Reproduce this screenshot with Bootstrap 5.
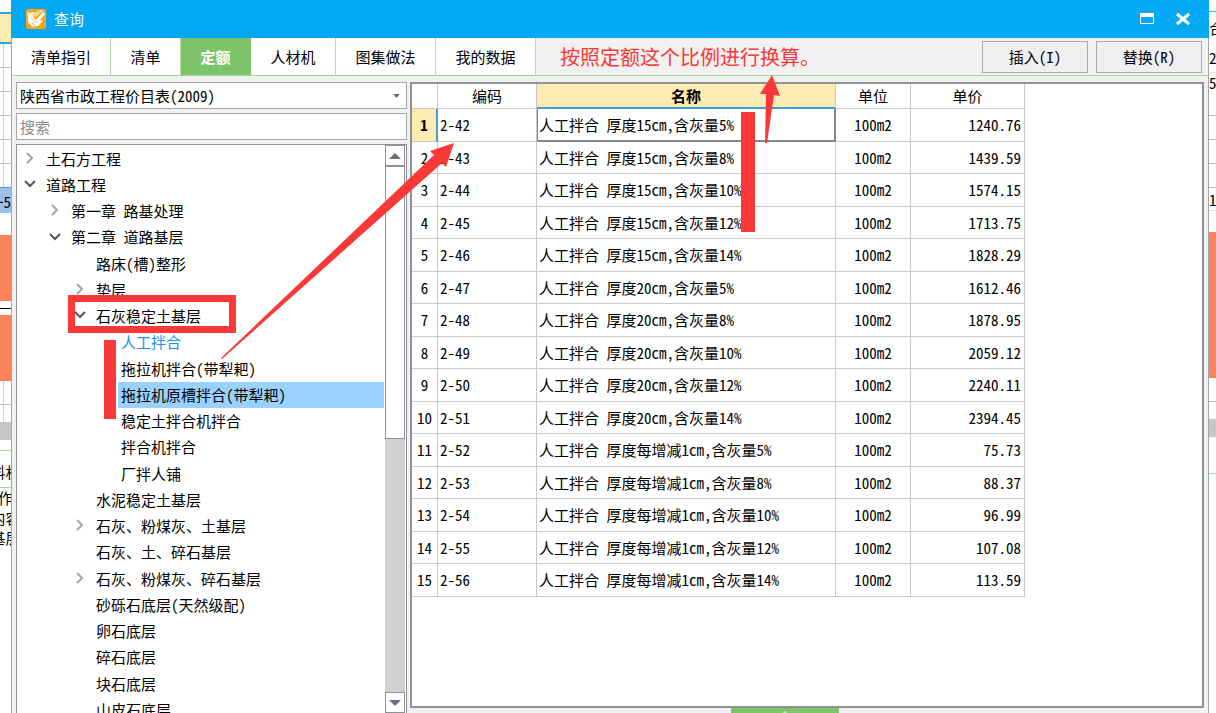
<!DOCTYPE html>
<html lang="zh-CN">
<head>
<meta charset="utf-8">
<meta name="viewport" content="width=device-width, initial-scale=1">
<title>查询</title>
<link href="https://cdn.jsdelivr.net/npm/bootstrap@5.3.0/dist/css/bootstrap.min.css" rel="stylesheet">
<style>
  :root { --line:#c9c9c9; --frame:#8f9399; --face:#f1f1f1; --sky:#02a9f2; --leaf:#7cc36a; --cream:#feebb2; --pen:#fb3838; --coral:#f9845c; }
  body { font-family:"Noto Sans CJK SC",sans-serif; font-size:15px; line-height:20px; color:#000; font-feature-settings:"hwid"; background:#fff; }
  button, select, input { font-feature-settings:inherit; }

  /* slices of the main application left and right of the dialog */
  .backdrop { width:11px; flex:none; }
  .backdrop.right-side { width:7px; }
  .backdrop > div { flex:none; overflow:hidden; white-space:nowrap; }
  .h-top { height:12px; } .h-cream { height:32px; background:var(--cream); border:solid #2ea6dc; border-width:2px 0; }
  .lines { background:linear-gradient(90deg,transparent 3px,#cfcfcf 3px 4px,transparent 4px),repeating-linear-gradient(#fff 0 23px,#bdbdbd 23px 24px); }
  .right-side .lines { background:repeating-linear-gradient(#fff 0 23px,#bdbdbd 23px 24px); }
  .h-grid { height:143px; }
  .h-pick { height:26px; border-top:1px solid #2ea6dc; background:#9dbfe8; line-height:28px; }
  .h-gap { height:22px; } .h-coral { height:66px; background:var(--coral); } .h-cell { height:14px; line-height:12px; }
  .h-few { height:41px; } .h-bar { height:18px; background:#c6c6c6; } .h-tab { height:11px; border-bottom:1px solid #a9d99d; }
  .h-text { height:37px; line-height:42px; border-bottom:1px solid #a9d99d; }
  .h-row { height:20px; }
  .h-coral-tall { height:146px; background:var(--coral); }
  .right-side .h-grid { height:98px; }

  .dialog { background:var(--face); min-width:0; }
  .dialog-frame { border:solid #a3a7ab; border-width:0 1px; min-height:0; }
  .title-bar { height:38px; background:var(--sky); padding:0 18px 0 15px; }
  .title-bar button { width:16px; height:16px; padding:0; border:0; background:none; line-height:0; }
  .window-keys { gap:20px; }
  .tool-bar { height:38px; border-bottom:1px solid #a5d69b; padding-right:6px; flex:none; }
  .tool-bar .nav-link { height:37px; padding:0; color:#000; background:#fff; border-right:1px solid #b4dfab; border-radius:0; }
  .tool-bar .nav-link.active { background:var(--leaf); color:#fff; font-weight:700; border-color:var(--leaf); }
  .w-a { width:99px; } .w-b { width:70px; } .w-c { width:85px; } .w-d { width:100px; }
  .remark { font-size:20px; color:var(--pen); }
  .btn-flat { width:106px; height:32px; padding:0; border:1px solid #aaa; border-radius:0; background:#efefef; font-size:15px; line-height:20px; color:#000; }

  .work { padding:6px 4px 0 4px; gap:3px; min-height:0; }
  .side { width:391px; flex:none; gap:4px; min-height:0; }
  .side .form-select, .side .form-control { height:27px; padding:0 3px; border:1px solid #a3a6aa; border-radius:0; font-size:15px; line-height:20px; color:#000; flex:none; }
  .side .form-select { background-image:url("data:image/svg+xml,%3Csvg xmlns='http://www.w3.org/2000/svg' viewBox='0 0 8 5'%3E%3Cpath fill='%23666' d='M0 0h8L4 5z'/%3E%3C/svg%3E"); background-size:7px 4px; background-position:right 6px center; }
  .side .form-control::placeholder { color:#8a8a8a; opacity:1; }

  .tree-box { border:1px solid var(--frame); border-bottom:0; background:#fff; min-height:0; overflow:hidden; }
  .tree { margin:0; padding:1px; list-style:none; min-width:0; }
  .tree li { display:flex; height:26px; line-height:26px; white-space:nowrap; }
  .tree li:nth-child(4n) { height:27px; }
  .tree .tw { width:25px; flex:none; display:flex; align-items:center; padding:0 0 2px 6px; }
  .tree a { color:inherit; text-decoration:none; flex:1; padding-left:3px; }
  .l1 { padding-left:25px; } .l2 { padding-left:50px; } .l3 { padding-left:75px; }
  .tree .chosen a { background:#99d1ff; }
  .tree .current a { color:#1e90f5; }
  .tw svg { width:12px; height:12px; fill:none; stroke-width:2; }
  .shut { stroke:#a5a5a5; } .open { stroke:#555; }

  .scroller { width:21px; flex:none; background:#d1d1d1; border-right:1px solid #fff; }
  .scroller > * { border:1px solid var(--frame); background:#fff; }
  .scroller button { height:21px; padding:0; line-height:0; flex:none; }
  .thumb { height:48%; }

  .rates-pane { min-width:0; }
  .sheet { border:2px solid var(--frame); border-left-width:2px; background:#fff; min-height:0; overflow:hidden; }
  .rates { width:613px; table-layout:fixed; margin:0; color:#000; border-color:var(--line); border-collapse:separate; border-spacing:0; }
  .rates > :not(caption) > * { border-width:0; }
  .rates > :not(caption) > * > * { height:33px; padding:0 2px; border:solid var(--line); border-width:0 1px 1px 0; white-space:nowrap; vertical-align:middle; background:none; box-shadow:none; }
  .rates tbody tr:nth-child(even) > * { height:32px; }
  .rates thead tr > * { height:25px; text-align:center; font-weight:400; }
  .rates tbody th { text-align:center; font-weight:400; padding:0; }
  .rates td:nth-child(4) { text-align:center; }
  .rates td:nth-child(5) { text-align:right; padding-right:3px; }
  .rates thead tr > .hot { background:var(--cream); font-weight:700; border-bottom:2px solid #3ba1cd; }
  .rates tbody tr > .hot { background:var(--cream); font-weight:700; border-right:2px solid #3ba1cd; }
  .rates tbody tr > .focus-cell { border:solid #85878a; border-width:0 2px 2px 1px; padding:0 1px; }
  .c1 { width:26px; } .c2 { width:99px; } .c3 { width:299px; } .c4 { width:75px; } .c5 { width:114px; }

  .foot { height:5px; flex:none; padding-left:321px; overflow:hidden; }
  .grip { width:108px; height:12px; padding:0; border:0; background:var(--leaf); display:block; line-height:0; }

  .marks { position:absolute; left:0; top:0; width:1216px; height:713px; pointer-events:none; fill:var(--pen); }
</style>
</head>
<body>
<div class="d-flex vh-100 overflow-hidden position-relative">

  <div class="backdrop d-flex flex-column" aria-hidden="true">
    <div class="h-top"></div><div class="h-cream"></div>
    <div class="h-grid lines"></div>
    <div class="h-pick d-flex justify-content-end">一5</div><div class="h-gap"></div>
    <div class="h-coral"></div><div class="h-cell d-flex justify-content-center">—</div><div class="h-coral"></div>
    <div class="h-few lines"></div><div class="h-bar"></div><div class="h-tab"></div>
    <div class="h-text d-flex justify-content-center">料机</div>
    <div class="h-row d-flex justify-content-center">作</div>
    <div class="h-row d-flex justify-content-center">内容</div>
    <div class="h-row d-flex justify-content-center">基层</div>
  </div>

  <main class="dialog flex-grow-1 d-flex flex-column">
    <header class="title-bar d-flex align-items-center text-white flex-shrink-0">
      <svg width="20" height="20" viewBox="0 0 20 20" aria-hidden="true">
        <rect width="20" height="20" rx="2" fill="#f8a41c"/>
        <path d="M1 3h9l3-2h5l-8 7-9-1z" fill="#fcd48b"/>
        <path d="M2 6 8 3 6 7l4 4 7-8 2 2-5 6 3 1-5 5-6 1-4-5z" fill="#fff"/>
        <path d="m5 8 4 5h3M6 14l3 2" stroke="#f9bd5e" stroke-width="1" fill="none"/>
      </svg>
      <span class="ms-2 me-auto">查询</span>
      <div class="window-keys d-flex">
        <button type="button" aria-label="最大化"><svg width="16" height="16"><path d="M1 2h14v11H1zM2 6v6h12V6z" fill="#fff" fill-rule="evenodd"/></svg></button>
        <button type="button" aria-label="关闭"><svg width="16" height="16"><path d="m2 3 12 10m0-10-12 10" stroke="#fff" stroke-width="3"/></svg></button>
      </div>
    </header>

    <div class="dialog-frame flex-grow-1 d-flex flex-column">
      <div class="tool-bar d-flex align-items-center">
        <nav class="nav flex-nowrap text-center" aria-label="查询类型">
          <a class="nav-link w-a d-flex align-items-center justify-content-center" href="#">清单指引</a>
          <a class="nav-link w-b d-flex align-items-center justify-content-center" href="#">清单</a>
          <a class="nav-link w-b d-flex align-items-center justify-content-center active" href="#">定额</a>
          <a class="nav-link w-c d-flex align-items-center justify-content-center" href="#">人材机</a>
          <a class="nav-link w-d d-flex align-items-center justify-content-center" href="#">图集做法</a>
          <a class="nav-link w-d d-flex align-items-center justify-content-center" href="#">我的数据</a>
        </nav>
        <span class="remark ms-4 me-auto text-nowrap">按照定额这个比例进行换算。</span>
        <button type="button" class="btn btn-flat me-2">插入(I)</button>
        <button type="button" class="btn btn-flat">替换(R)</button>
      </div>

      <div class="work d-flex flex-grow-1">
        <section class="side d-flex flex-column">
          <select class="form-select" aria-label="定额库"><option>陕西省市政工程价目表(2009)</option></select>
          <input class="form-control" type="text" placeholder="搜索" aria-label="搜索">
          <div class="tree-box d-flex flex-grow-1">
            <ul class="tree flex-grow-1">
              <li><span class="tw shut"><svg viewBox="0 0 12 12"><path d="m3 1 5 5-5 5"/></svg></span><a href="#">土石方工程</a></li>
              <li><span class="tw open"><svg viewBox="0 0 12 12"><path d="m1 3 5 5 5-5"/></svg></span><a href="#">道路工程</a></li>
              <li class="l1"><span class="tw shut"><svg viewBox="0 0 12 12"><path d="m3 1 5 5-5 5"/></svg></span><a href="#">第一章 路基处理</a></li>
              <li class="l1"><span class="tw open"><svg viewBox="0 0 12 12"><path d="m1 3 5 5 5-5"/></svg></span><a href="#">第二章 道路基层</a></li>
              <li class="l2"><span class="tw"></span><a href="#">路床(槽)整形</a></li>
              <li class="l2"><span class="tw shut"><svg viewBox="0 0 12 12"><path d="m3 1 5 5-5 5"/></svg></span><a href="#">垫层</a></li>
              <li class="l2"><span class="tw open"><svg viewBox="0 0 12 12"><path d="m1 3 5 5 5-5"/></svg></span><a href="#">石灰稳定土基层</a></li>
              <li class="l3 current"><span class="tw"></span><a href="#">人工拌合</a></li>
              <li class="l3"><span class="tw"></span><a href="#">拖拉机拌合(带犁耙)</a></li>
              <li class="l3 chosen"><span class="tw"></span><a href="#">拖拉机原槽拌合(带犁耙)</a></li>
              <li class="l3"><span class="tw"></span><a href="#">稳定土拌合机拌合</a></li>
              <li class="l3"><span class="tw"></span><a href="#">拌合机拌合</a></li>
              <li class="l3"><span class="tw"></span><a href="#">厂拌人铺</a></li>
              <li class="l2"><span class="tw"></span><a href="#">水泥稳定土基层</a></li>
              <li class="l2"><span class="tw shut"><svg viewBox="0 0 12 12"><path d="m3 1 5 5-5 5"/></svg></span><a href="#">石灰、粉煤灰、土基层</a></li>
              <li class="l2"><span class="tw"></span><a href="#">石灰、土、碎石基层</a></li>
              <li class="l2"><span class="tw shut"><svg viewBox="0 0 12 12"><path d="m3 1 5 5-5 5"/></svg></span><a href="#">石灰、粉煤灰、碎石基层</a></li>
              <li class="l2"><span class="tw"></span><a href="#">砂砾石底层(天然级配)</a></li>
              <li class="l2"><span class="tw"></span><a href="#">卵石底层</a></li>
              <li class="l2"><span class="tw"></span><a href="#">碎石底层</a></li>
              <li class="l2"><span class="tw"></span><a href="#">块石底层</a></li>
              <li class="l2"><span class="tw"></span><a href="#">山皮石底层</a></li>
            </ul>
            <div class="scroller d-flex flex-column">
              <button type="button" aria-label="向上滚动"><svg width="12" height="6"><path d="m0 6 6-6 6 6z" fill="#6c7080"/></svg></button>
              <div class="thumb"></div>
              <button type="button" class="mt-auto" aria-label="向下滚动"><svg width="12" height="6"><path d="m0 0 6 6 6-6z" fill="#6c7080"/></svg></button>
            </div>
          </div>
        </section>

        <section class="rates-pane flex-grow-1 d-flex flex-column">
          <div class="sheet flex-grow-1">
            <table class="table rates">
              <colgroup><col class="c1"><col class="c2"><col class="c3"><col class="c4"><col class="c5"></colgroup>
              <thead><tr><td></td><th>编码</th><th class="hot">名称</th><th>单位</th><th>单价</th></tr></thead>
              <tbody>
                <tr><th class="hot">1</th><td>2-42</td><td class="focus-cell">人工拌合 厚度15cm,含灰量5%</td><td>100m2</td><td>1240.76</td></tr>
                <tr><th>2</th><td>2-43</td><td>人工拌合 厚度15cm,含灰量8%</td><td>100m2</td><td>1439.59</td></tr>
                <tr><th>3</th><td>2-44</td><td>人工拌合 厚度15cm,含灰量10%</td><td>100m2</td><td>1574.15</td></tr>
                <tr><th>4</th><td>2-45</td><td>人工拌合 厚度15cm,含灰量12%</td><td>100m2</td><td>1713.75</td></tr>
                <tr><th>5</th><td>2-46</td><td>人工拌合 厚度15cm,含灰量14%</td><td>100m2</td><td>1828.29</td></tr>
                <tr><th>6</th><td>2-47</td><td>人工拌合 厚度20cm,含灰量5%</td><td>100m2</td><td>1612.46</td></tr>
                <tr><th>7</th><td>2-48</td><td>人工拌合 厚度20cm,含灰量8%</td><td>100m2</td><td>1878.95</td></tr>
                <tr><th>8</th><td>2-49</td><td>人工拌合 厚度20cm,含灰量10%</td><td>100m2</td><td>2059.12</td></tr>
                <tr><th>9</th><td>2-50</td><td>人工拌合 厚度20cm,含灰量12%</td><td>100m2</td><td>2240.11</td></tr>
                <tr><th>10</th><td>2-51</td><td>人工拌合 厚度20cm,含灰量14%</td><td>100m2</td><td>2394.45</td></tr>
                <tr><th>11</th><td>2-52</td><td>人工拌合 厚度每增减1cm,含灰量5%</td><td>100m2</td><td>75.73</td></tr>
                <tr><th>12</th><td>2-53</td><td>人工拌合 厚度每增减1cm,含灰量8%</td><td>100m2</td><td>88.37</td></tr>
                <tr><th>13</th><td>2-54</td><td>人工拌合 厚度每增减1cm,含灰量10%</td><td>100m2</td><td>96.99</td></tr>
                <tr><th>14</th><td>2-55</td><td>人工拌合 厚度每增减1cm,含灰量12%</td><td>100m2</td><td>107.08</td></tr>
                <tr><th>15</th><td>2-56</td><td>人工拌合 厚度每增减1cm,含灰量14%</td><td>100m2</td><td>113.59</td></tr>
              </tbody>
            </table>
          </div>
          <div class="foot"><button type="button" class="grip" aria-label="展开"><svg width="12" height="8"><path d="m1 8 5-6 5 6" fill="none" stroke="#c5e6bd" stroke-width="2"/></svg></button></div>
        </section>
      </div>
    </div>
  </main>

  <div class="backdrop right-side d-flex flex-column" aria-hidden="true">
    <div class="h-top border-bottom border-info"></div>
    <div class="h-cream bg-white border-0 d-flex align-items-center">合</div>
    <div class="h-row mt-1">2</div><div class="h-row mt-1 border-top">5</div>
    <div class="h-grid lines"></div>
    <div class="h-row">1</div><div class="h-gap border-top"></div>
    <div class="h-coral-tall"></div><div class="h-few lines"></div><div class="h-bar"></div>
    <div class="h-text"></div>
  </div>

  <!-- red pen annotations drawn over the dialog -->
  <svg class="marks" viewBox="0 0 1216 713" aria-hidden="true">
    <path d="M68 295h168v38H68zM75 302v24h154v-24z" fill-rule="evenodd"/>
    <path d="M104 340h12v79h-12zM741 112h14v120h-14z"/>
    <path d="M221 358 434 155l-4-4 24-8-8 24-4-4-220 196z"/>
    <path d="m772 75 8 21-6-1-7 48h-2l1-49h-6z"/>
  </svg>
</div>
<script src="https://cdn.jsdelivr.net/npm/bootstrap@5.3.0/dist/js/bootstrap.bundle.min.js"></script>
</body>
</html>
